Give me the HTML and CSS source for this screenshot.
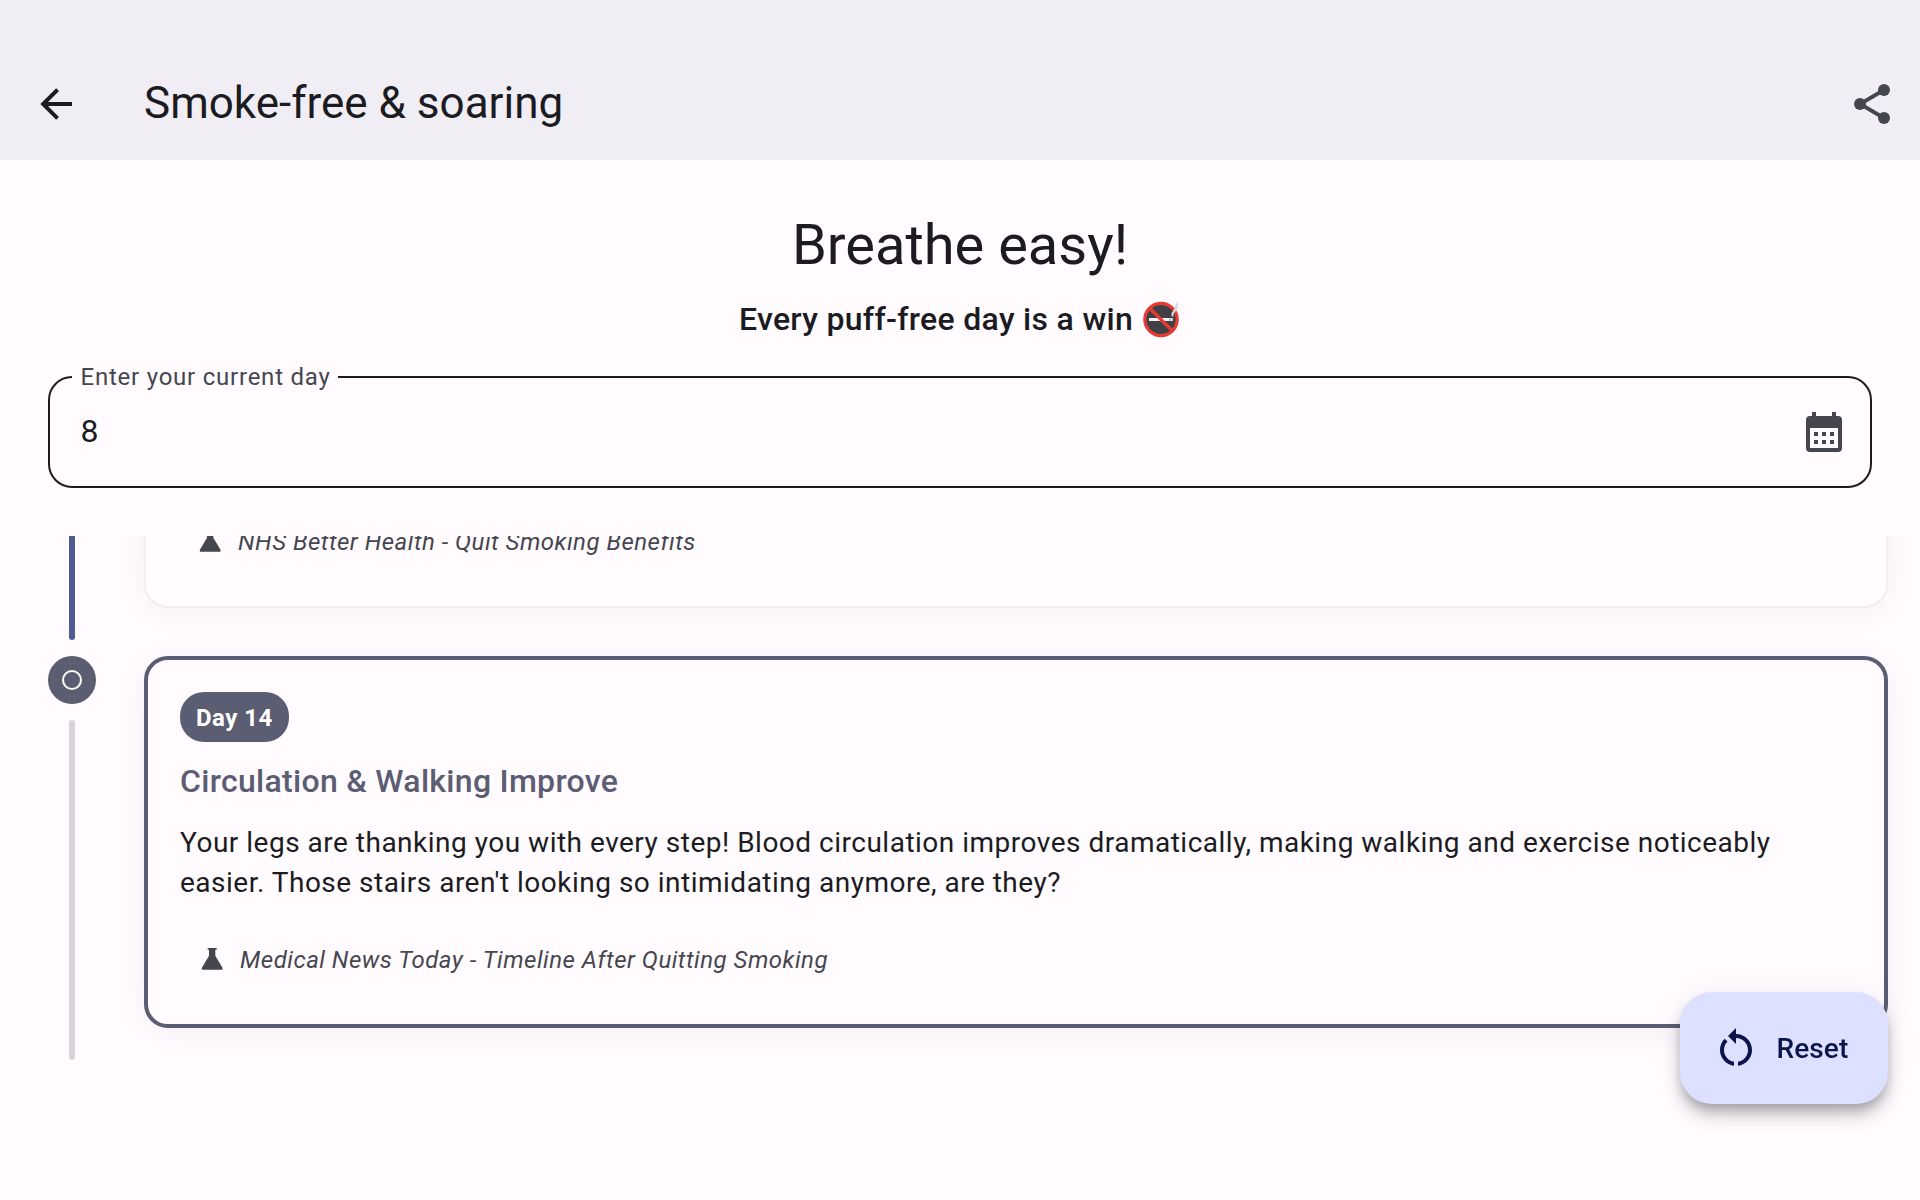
FILE: index.html
```html
<!DOCTYPE html>
<html lang="en">
<head>
<meta charset="utf-8">
<title>Smoke-free &amp; soaring</title>
<link rel="stylesheet" href="styles.css">
</head>
<body>
<header class="app-bar">
  <svg class="icon" viewBox="0 0 24 24"><path d="M20,11V13H8L13.5,18.5L12.08,19.92L4.16,12L12.08,4.08L13.5,5.5L8,11H20Z"/></svg>
  <h1 class="app-title">Smoke-free &amp; soaring</h1>
  <svg class="icon share" viewBox="0 0 24 24"><path d="M18 5L6 12l12 7" fill="none" stroke="currentColor" stroke-width="1.9"/><circle cx="18" cy="5" r="3"/><circle cx="6" cy="12" r="3"/><circle cx="18" cy="19" r="3"/></svg>
</header>
<section class="intro">
  <h2 class="headline">Breathe easy!</h2>
  <p class="tagline"><span>Every puff-free day is a win</span>
    <svg class="no-smoking" viewBox="0 0 36 37">
      <circle cx="18" cy="18.500" r="16.2" fill="#414145" stroke="#e83b36" stroke-width="3.2"/>
      <path d="M6 17h24v3H6z" fill="#f4f4f4"/><path d="M26.5 17h1v3h-1zM29.3 17h1v3h-1z" fill="#8b8b8b"/>
      <path d="M6.500 7l23 23" stroke="#e83b36" stroke-width="3.200"/>
      <path d="M28.800 15.500c-1.500-5 2.600-5.500 3-9C32.200 3.500 33.500 1.500 35.500 .5c-1.200 3 .3 6-2 9-2 2-3.500 3-3 6z" fill="#dcdcde"/>
    </svg>
  </p>
  <div class="field">
    <label class="field-label">Enter your current day</label>
    <span class="field-value">8</span>
    <svg class="icon muted" viewBox="0 0 24 24"><path fill-rule="evenodd" d="M6 2h2v2h8V2h2v2h1a2 2 0 0 1 2 2v14a2 2 0 0 1-2 2H5a2 2 0 0 1-2-2V6a2 2 0 0 1 2-2h1zM5 10v10h14V10zM7 12h2v2H7zM11 12h2v2h-2zM15 12h2v2h-2zM7 16h2v2H7zM11 16h2v2h-2zM15 16h2v2h-2z"/></svg>
  </div>
</section>
<main class="timeline">
  <article class="step step-past">
    <div class="rail"><span class="line line-done"></span></div>
    <div class="card">
      <p class="source"><svg class="flask" viewBox="0 0 24 24"><path d="M7.700 0h9v1.800h-1.400v6l6.900 11.400c.9 1.700.4 2.600-.8 2.600H3c-1.200 0-1.700-.9-.8-2.600L9 7.800v-6H7.700z"/></svg>NHS Better Health - Quit Smoking Benefits</p>
    </div>
  </article>
  <article class="step">
    <div class="rail"><span class="dot"><i class="ring"></i></span><span class="line"></span></div>
    <div class="card card-next">
      <span class="badge">Day 14</span>
      <h3 class="card-title">Circulation &amp; Walking Improve</h3>
      <p class="card-text">Your legs are thanking you with every step! Blood circulation improves dramatically, making walking and exercise noticeably easier. Those stairs aren't looking so intimidating anymore, are they?</p>
      <p class="source"><svg class="flask" viewBox="0 0 24 24"><path d="M7.700 0h9v1.800h-1.400v6l6.900 11.400c.9 1.700.4 2.600-.8 2.600H3c-1.200 0-1.700-.9-.8-2.600L9 7.800v-6H7.700z"/></svg>Medical News Today - Timeline After Quitting Smoking</p>
    </div>
  </article>
</main>
<button class="fab"><svg class="icon" viewBox="0 0 24 24"><path d="M12 5V2L8 6l4 4V7c3.310 0 6 2.690 6 6 0 2.970-2.170 5.430-5 5.910v2.020c3.950-.49 7-3.850 7-7.930 0-4.420-3.580-8-8-8zm-6 8c0-1.650.67-3.150 1.760-4.240L6.340 7.340C4.900 8.790 4 10.790 4 13c0 4.080 3.050 7.440 7 7.930v-2.020c-2.830-.48-5-2.940-5-5.910z"/></svg><span class="fab-label">Reset</span></button>
</body>
</html>
```
FILE: styles.css
```css
* { box-sizing: border-box; margin: 0; padding: 0; }
body {
  width: 1920px;
  height: 1200px;
  overflow: hidden;
  display: flex;
  flex-direction: column;
  background: #fffbff;
  color: #1b1b21;
  font-family: Roboto, sans-serif;
}
.icon { width: 48px; height: 48px; flex: none; fill: currentColor; }
.muted { color: #46464f; }

.app-bar {
  height: 160px;
  padding: 48px 24px 0 32px;
  display: flex;
  align-items: center;
  background: #f0eef4;
}
.app-title { flex: 1; margin-left: 64px; padding-bottom: 2px; font-size: 44px; font-weight: 400; line-height: 54px; }
.share { color: #46464f; }

.intro { height: 376px; padding: 49px 48px 0; display: flex; flex-direction: column; }
.headline { text-align: center; font-size: 56px; font-weight: 400; line-height: 72px; }
.tagline {
  margin-top: 14px;
  padding-right: 2px;
  display: flex;
  justify-content: center;
  align-items: center;
  gap: 10px;
  font-size: 32px;
  font-weight: 500;
  line-height: 48px;
  letter-spacing: 0.3px;
}
.no-smoking { width: 36px; height: 37px; overflow: visible; }
.field {
  position: relative;
  height: 112px;
  margin-top: 33px;
  padding: 0 22px 0 30.5px;
  border: 2px solid #1b1b21;
  border-radius: 24px;
  display: flex;
  align-items: center;
  justify-content: space-between;
}
.field-label {
  position: absolute;
  top: -17px;
  left: 22px;
  padding: 0 7px 0 8.5px;
  background: #fffbff;
  color: #46464f;
  font-size: 24px;
  line-height: 32px;
  letter-spacing: 0.77px;
}
.field-value { padding-bottom: 2px; font-size: 32px; letter-spacing: 1px; }

.timeline { flex: 1; overflow: hidden; padding: 0 32px 0 48px; }
.step { height: 420px; display: flex; gap: 48px; }
.step-past { height: 240px; margin-top: -120px; }
.rail { width: 48px; display: flex; flex-direction: column; align-items: center; gap: 16px; padding-bottom: 16px; }
.line { flex: 1; width: 6px; border-radius: 3px; background: #d6d4d9; }
.line-done { background: #505b92; }
.dot { width: 48px; height: 48px; border-radius: 50%; background: #5b5d72; display: flex; align-items: center; justify-content: center; }
.ring { width: 20px; height: 20px; border: 2px solid #fff; border-radius: 50%; }
.card {
  flex: 1;
  margin-bottom: 48px;
  padding: 32px;
  border: 2px solid #f1eef3;
  border-radius: 24px;
  background: #fffbff;
  box-shadow: 0 4px 32px rgba(0, 0, 0, 0.05);
  display: flex;
  flex-direction: column;
  align-items: flex-start;
}
.card-next { border: 4px solid #5b5d72; }
.badge {
  height: 50px;
  padding: 0 16px;
  border-radius: 24px;
  background: #5b5d72;
  color: #fff;
  font-size: 24px;
  font-weight: 700;
  line-height: 52px;
  letter-spacing: 0.5px;
}
.card-title { margin-top: 15px; color: #5b5d72; font-size: 32px; font-weight: 500; line-height: 48px; letter-spacing: 0.3px; }
.card-text { margin-top: 18px; font-size: 28px; line-height: 40px; letter-spacing: 0.5px; }
.source {
  margin-top: auto;
  margin-bottom: 16px;
  padding-left: 20px;
  display: flex;
  align-items: center;
  gap: 16px;
  color: #46464f;
  font-size: 24px;
  font-style: italic;
  line-height: 32px;
  letter-spacing: 0.5px;
}
.flask { width: 24px; height: 24px; fill: currentColor; }

.fab {
  position: fixed;
  right: 32px;
  bottom: 96px;
  width: 208px;
  height: 112px;
  padding-left: 32px;
  display: flex;
  align-items: center;
  gap: 16.5px;
  border: 0;
  border-radius: 32px;
  background: #dee0ff;
  color: #0a154b;
  font: 500 28px/40px Roboto, sans-serif;
  letter-spacing: 0.1px;
  box-shadow: 0 8px 12px -2px rgba(0, 0, 0, 0.22), 0 12px 20px rgba(0, 0, 0, 0.16), 0 2px 36px rgba(0, 0, 0, 0.06);
}
.fab-label { padding-top: 2px; }
```
